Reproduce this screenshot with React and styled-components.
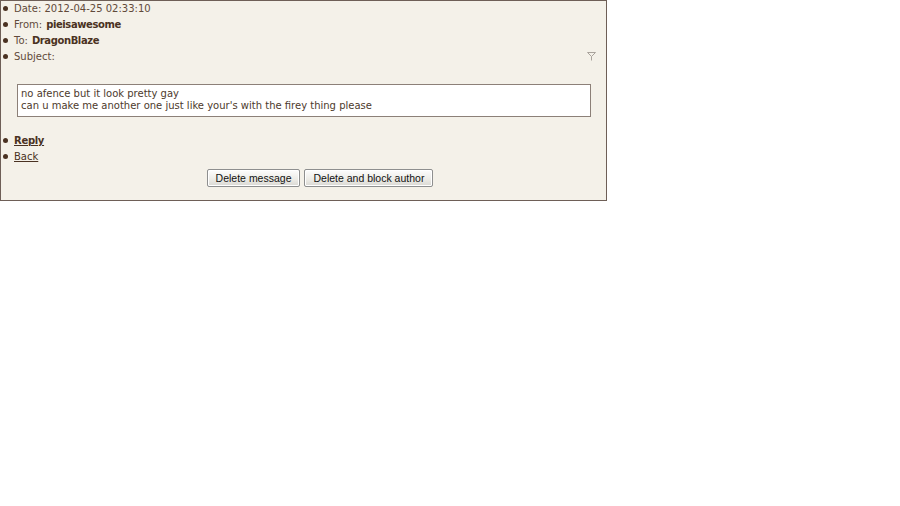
import React from "react";
import styled, { createGlobalStyle } from "styled-components";

const Global = createGlobalStyle`
  html, body { margin: 0; padding: 0; background: #fff; }
  body { font-family: "DejaVu Sans", Verdana, sans-serif; }
`;

const Panel = styled.div`
  width: 605px;
  height: 199px;
  border: 1px solid #6e5f57;
  background: #f4f1e9;
  color: #614a3a;
  font-size: 10px;
  position: relative;
`;

const List = styled.ul`
  list-style: none;
  margin: 0;
  padding: 0;
`;

const Item = styled.li`
  position: relative;
  height: 16px;
  line-height: 16px;
  padding-left: 13px;
  display: flex;
  align-items: center;
  &::before {
    content: "";
    position: absolute;
    left: 2px;
    top: 5px;
    width: 5px;
    height: 5px;
    border-radius: 50%;
    background: #4a3222;
  }
`;

const Strong = styled.b`
  color: #4a3222;
  margin-left: 4px;
  letter-spacing: -0.4px;
`;

const Flag = styled.svg`
  position: absolute;
  right: 10px;
  top: 3px;
`;

const MessageBox = styled.div`
  margin: 19px 0 16px 16px;
  width: 566px;
  height: 25px;
  padding: 3px;
  background: #fff;
  border: 1px solid #8c8078;
  line-height: 12px;
  color: #4d3a2c;
`;

const Link = styled.a`
  color: #4a3222;
  text-decoration: underline;
  font-weight: ${(p) => (p.$bold ? "bold" : "normal")};
  letter-spacing: ${(p) => (p.$bold ? "-0.3px" : "0")};
  cursor: pointer;
`;

const Buttons = styled.div`
  display: flex;
  justify-content: center;
  gap: 4px;
  margin-top: 4px;
  padding-left: 33px;
`;

const Button = styled.button`
  font-family: "Liberation Sans", Arial, sans-serif;
  font-size: 10.5px;
  color: #111;
  height: 18px;
  padding: 0 8px;
  border: 1px solid #8e8f8f;
  border-radius: 2px;
  background: linear-gradient(#fdfdfd, #ecebe6 60%, #d9d8d3);
  box-shadow: inset 0 0 0 1px #fff;
  line-height: 16px;
`;

export default function App() {
  return (
    <>
      <Global />
      <Panel>
        <List>
          <Item>Date: 2012-04-25 02:33:10</Item>
          <Item>From:<Strong>pieisawesome</Strong></Item>
          <Item>To:<Strong>DragonBlaze</Strong></Item>
          <Item>
            Subject:
            <Flag width="9" height="9" viewBox="0 0 9 9">
              <path d="M0.5 0.5 L8.5 0.5 L4.5 4.5 Z M4.5 4.5 L4.5 8.5" fill="none" stroke="#a9a39c" strokeWidth="1" />
            </Flag>
          </Item>
        </List>
        <MessageBox>
          no afence but it look pretty gay
          <br />
          can u make me another one just like your's with the firey thing please
        </MessageBox>
        <List>
          <Item><Link $bold>Reply</Link></Item>
          <Item><Link>Back</Link></Item>
        </List>
        <Buttons>
          <Button>Delete message</Button>
          <Button>Delete and block author</Button>
        </Buttons>
      </Panel>
    </>
  );
}
